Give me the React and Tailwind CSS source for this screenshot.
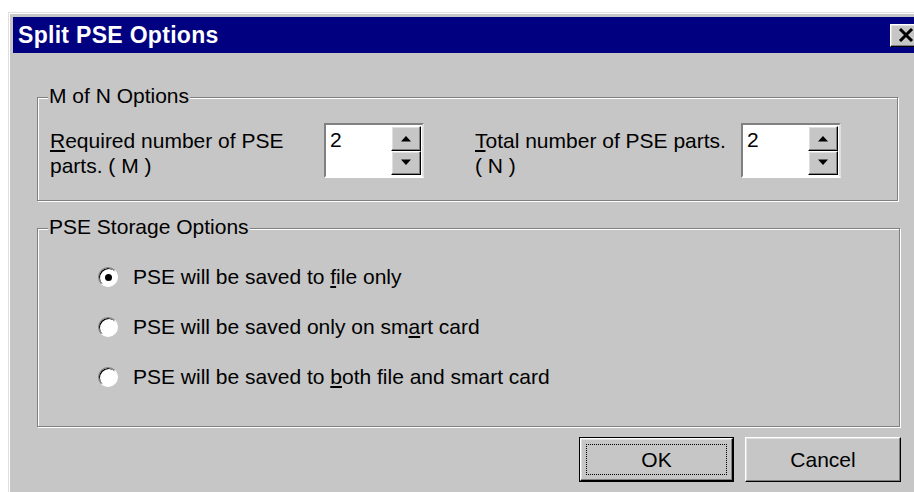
import React from 'react';

// Win95-style bevel helpers
const raised = 'border-t border-l border-t-white border-l-white border-b border-r border-b-black border-r-black shadow-[inset_-1px_-1px_0_#808080,inset_1px_1px_0_#dfdfdf]';

const SpinButton = ({ dir }) => (
  <div className={`flex-1 flex items-center justify-center bg-[#c6c6c6] ${raised}`}>
    <svg width="12" height="7" viewBox="0 0 12 7">
      {dir === 'up' ? <polygon points="1,6.5 6,1 11,6.5" fill="black" /> : <polygon points="1,0.5 6,6 11,0.5" fill="black" />}
    </svg>
  </div>
);

const SpinBox = ({ value }) => (
  <div className="w-[100px] h-[55px] shrink-0 border-t-2 border-l-2 border-t-[#808080] border-l-[#808080] border-b-2 border-r-2 border-b-white border-r-[#dfdfdf] shadow-[inset_1px_1px_0_#000]">
    <div className="flex h-full bg-white pl-[4px] pt-[1px]">
      <div className="flex-1 text-[21px] leading-[24px] pt-[2px]">{value}</div>
      <div className="w-[30px] flex flex-col mr-[1px] mb-[1px]">
        <SpinButton dir="up" />
        <SpinButton dir="down" />
      </div>
    </div>
  </div>
);

const GroupBox = ({ title, className, children }) => (
  <div className={`relative border border-[#808080] shadow-[1px_1px_0_white,inset_1px_1px_0_white] ${className}`}>
    <div className="absolute left-[10px] top-[-14px] bg-[#c6c6c6] px-[1px] text-[21px] leading-[24px]">{title}</div>
    {children}
  </div>
);

const Radio = ({ checked, children }) => (
  <div className="flex items-center h-[24px]">
    <div className="w-[20px] h-[20px] rounded-full bg-white border border-t-[#808080] border-l-[#808080] border-b-white border-r-white shadow-[inset_1px_1px_0_#000] flex items-center justify-center">
      {checked && <div className="w-[7px] h-[7px] rounded-full bg-black" />}
    </div>
    <div className="ml-[15px] text-[21px] leading-[24px]">{children}</div>
  </div>
);

export default function App() {
  return (
    <div className="w-[914px] h-[492px] overflow-hidden bg-white pt-[12px] pl-[8px] text-black" style={{ fontFamily: '"Liberation Sans", Arial, sans-serif' }}>
      <div className="w-[920px] h-[490px] border-t border-l border-[#dfdfdf]">
        <div className="h-full border-t border-l border-white bg-[#c6c6c6] pt-[3px] pl-[3px]">
          {/* title bar */}
          <div className="h-[36px] bg-[#000080] flex items-center justify-between pl-[5px] pr-[6px]">
            <span className="text-white font-bold text-[23px] tracking-[0.3px]">Split PSE Options</span>
            <div className={`w-[32px] h-[23px] bg-[#c6c6c6] flex items-center justify-center ${raised}`}>
              <svg width="16" height="14" viewBox="0 0 16 14">
                <path d="M2 1 L14 13 M14 1 L2 13" stroke="black" strokeWidth="3" />
              </svg>
            </div>
          </div>

          <div className="pl-[24px] pt-[44px]">
            <GroupBox title="M of N Options" className="w-[861px] h-[104px]">
              <div className="flex items-start pl-[12px] pt-[25px]">
                <div className="w-[274px] mt-[5px] text-[21px] leading-[25px]">
                  <span className="underline underline-offset-2">R</span>equired number of PSE<br />parts. ( M )
                </div>
                <SpinBox value="2" />
                <div className="w-[266px] ml-[51px] mt-[5px] text-[21px] leading-[25px]">
                  <span className="underline underline-offset-2">T</span>otal number of PSE parts.<br />( N )
                </div>
                <SpinBox value="2" />
              </div>
            </GroupBox>

            <GroupBox title="PSE Storage Options" className="w-[863px] h-[199px] mt-[27px]">
              <div className="flex flex-col gap-[26px] pl-[60px] pt-[36px]">
                <Radio checked>PSE will be saved to <span className="underline underline-offset-2">f</span>ile only</Radio>
                <Radio>PSE will be saved only on sm<span className="underline underline-offset-2">a</span>rt card</Radio>
                <Radio>PSE will be saved to <span className="underline underline-offset-2">b</span>oth file and smart card</Radio>
              </div>
            </GroupBox>

            <div className="flex w-[864px] justify-end gap-[11px] mt-[10px]">
              <div className="w-[155px] h-[45px] border border-black">
                <div className={`h-full bg-[#c6c6c6] p-[5px] ${raised}`}>
                  <div className="h-full border border-dotted border-black flex items-center justify-center text-[21px]">OK</div>
                </div>
              </div>
              <div className={`w-[156px] h-[45px] bg-[#c6c6c6] flex items-center justify-center text-[21px] ${raised}`}>
                Cancel
              </div>
            </div>
          </div>
        </div>
      </div>
    </div>
  );
}
